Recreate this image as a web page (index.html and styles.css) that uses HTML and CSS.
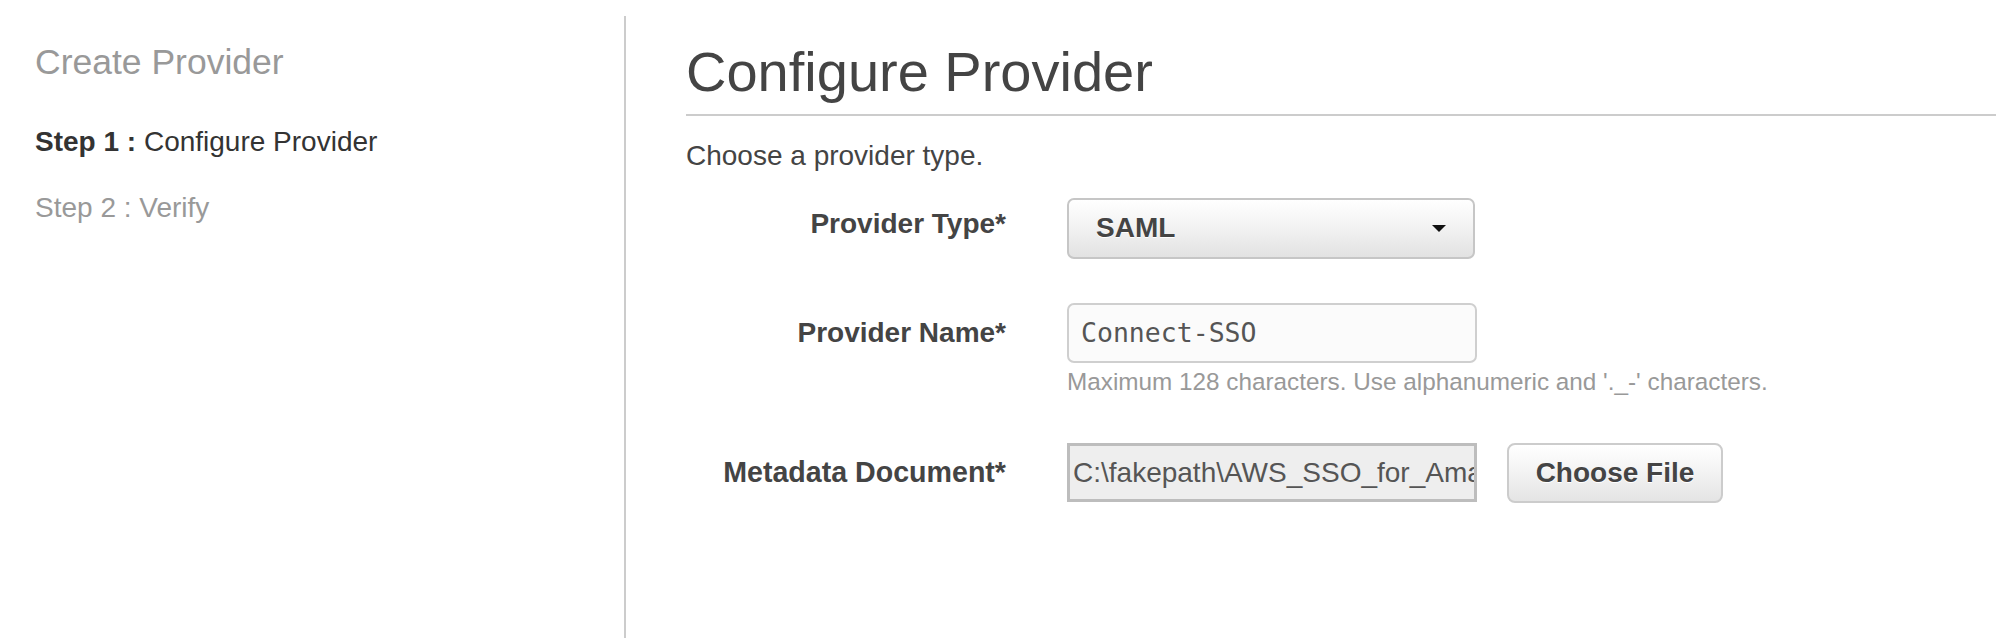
FILE: index.html
```html
<!DOCTYPE html>
<html lang="en">
<head>
<meta charset="utf-8">
<title>Create Provider</title>
<link rel="stylesheet" href="styles.css">
</head>
<body>
<div class="page">
  <aside class="sidebar">
    <div class="side-title">Create Provider</div>
    <ul class="steps">
      <li class="step step-current"><b>Step 1 :</b> Configure Provider</li>
      <li class="step">Step 2 : Verify</li>
    </ul>
  </aside>
  <main class="main">
    <h1 class="title">Configure Provider</h1>
    <p class="intro">Choose a provider type.</p>
    <div class="form">
      <div class="field field-type">
        <label class="label">Provider Type*</label>
        <div class="select">
          <span class="select-value">SAML</span>
          <span class="caret"></span>
        </div>
      </div>
      <div class="field field-name">
        <label class="label" for="pname">Provider Name*</label>
        <input class="text-input" id="pname" type="text" value="Connect-SSO">
        <div class="help">Maximum 128 characters. Use alphanumeric and '._-' characters.</div>
      </div>
      <div class="field field-file">
        <label class="label">Metadata Document*</label>
        <div class="file-row">
          <div class="file-box">C:\fakepath\AWS_SSO_for_Ama</div>
          <button class="file-btn" type="button">Choose File</button>
        </div>
      </div>
    </div>
  </main>
</div>
</body>
</html>
```

FILE: styles.css
```css
* { box-sizing: border-box; }

html, body {
  margin: 0;
  padding: 0;
  background: #ffffff;
}

body {
  font-family: "Liberation Sans", Arial, Helvetica, sans-serif;
  color: #444444;
  width: 1996px;
  height: 638px;
  overflow: hidden;
}

.page {
  display: flex;
  height: 638px;
}

/* ---------- sidebar ---------- */
.sidebar {
  width: 624px;
  flex: none;
  padding: 42px 0 0 35px;
}

.side-title {
  font-size: 35.5px;
  line-height: 41px;
  color: #999999;
}

.steps {
  list-style: none;
  margin: 26px 0 0;
  padding: 0;
}

.step {
  font-size: 28px;
  line-height: 66px;
  color: #999999;
}

.step-current {
  color: #333333;
}

.step-current b {
  font-weight: bold;
}

/* ---------- main ---------- */
.main {
  flex: 1;
  margin-top: 16px;
  border-left: 2px solid #cccccc;
  padding-left: 60px;
}

.title {
  margin: 28px 0 0;
  padding-bottom: 14px;
  border-bottom: 2px solid #cccccc;
  font-size: 56px;
  line-height: 56px;
  font-weight: normal;
  color: #444444;
}

.intro {
  margin: 23px 0 0;
  font-size: 28px;
  line-height: 33.6px;
  color: #444444;
}

.form {
  display: flex;
  flex-direction: column;
  margin-top: 25px;
}

.field {
  display: grid;
  grid-template-columns: 320px auto;
  column-gap: 61px;
  align-items: center;
  justify-content: start;
}

.field-name { margin-top: 44px; }
.field-file { margin-top: 47px; }

.label {
  grid-column: 1;
  grid-row: 1;
  text-align: right;
  font-size: 28px;
  font-weight: bold;
  color: #444444;
}

.field-type .label {
  padding-bottom: 8px;
}

.field-file .label {
  font-size: 28.6px;
}

/* select */
.select {
  grid-column: 2;
  width: 408px;
  height: 61px;
  border: 2px solid #c6c6c6;
  border-radius: 7px;
  background: linear-gradient(#ffffff, #f3f3f3 45%, #e2e2e2);
  display: flex;
  align-items: center;
  justify-content: space-between;
  padding: 0 27px 0 27px;
}

.select-value {
  font-size: 28px;
  font-weight: bold;
  color: #444444;
  text-shadow: 0 1px 0 #ffffff;
}

.caret {
  width: 0;
  height: 0;
  border-left: 7px solid transparent;
  border-right: 7px solid transparent;
  border-top: 7px solid #111111;
}

/* text input */
.text-input {
  grid-column: 2;
  grid-row: 1;
  width: 410px;
  height: 60px;
  margin: 0;
  border: 2px solid #cfcfcf;
  border-radius: 7px;
  background: #fbfbfb;
  padding: 0 12px;
  font-family: "DejaVu Sans Mono", monospace;
  font-size: 26.5px;
  color: #555555;
  outline: none;
}

.help {
  grid-column: 2;
  grid-row: 2;
  margin-top: 4px;
  font-size: 24.3px;
  line-height: 29px;
  color: #999999;
  white-space: nowrap;
}

/* file */
.file-row {
  grid-column: 2;
  display: flex;
  align-items: center;
  gap: 30px;
}

.file-box {
  width: 410px;
  height: 59px;
  border: 3px solid #bdbdbd;
  background: #eeeeee;
  padding: 0 0 0 3px;
  font-size: 28px;
  line-height: 53px;
  color: #555555;
  white-space: nowrap;
  overflow: hidden;
}

.file-btn {
  width: 216px;
  height: 60px;
  margin: 0;
  border: 2px solid #cccccc;
  border-radius: 8px;
  background: linear-gradient(#ffffff, #f4f4f4 45%, #e4e4e4);
  font-family: "Liberation Sans", Arial, sans-serif;
  font-size: 28px;
  font-weight: bold;
  color: #444444;
  text-shadow: 0 1px 0 #ffffff;
  padding: 0;
}
```
